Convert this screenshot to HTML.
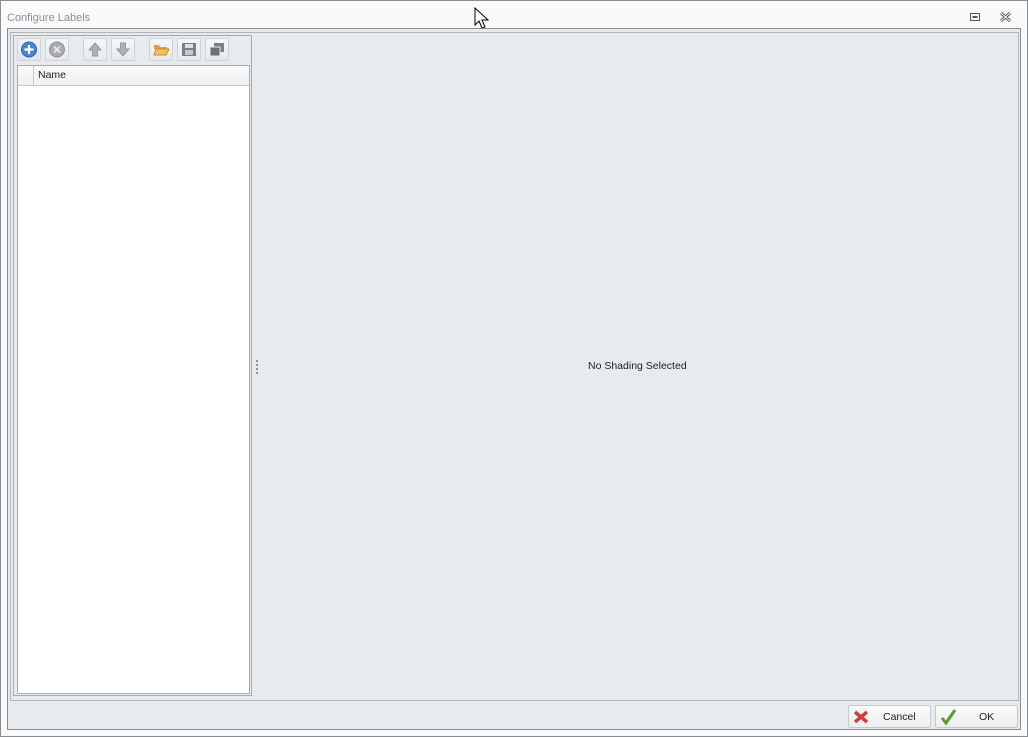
<!DOCTYPE html>
<html><head><style>
*{margin:0;padding:0;box-sizing:border-box}
body{width:1028px;height:737px;background:#fafafa;font-family:"Liberation Sans",sans-serif;font-size:10.5px;color:#222;position:relative;overflow:hidden}
.abs{position:absolute}
.win{left:0;top:0;width:1028px;height:737px;border:1px solid #8a8d91}
.title{left:7px;top:12px;color:#8a8f96;font-size:11px}
.content{left:7px;top:28px;width:1014px;height:702px;border:1px solid #8a8d91;background:#e8ebee}
.panel{left:10px;top:32px;width:1009px;height:669px;border:1px solid #b2b6ba}
.group{left:13px;top:35px;width:239px;height:661px;border:1px solid #a8acb0}
.grid{left:17px;top:65px;width:233px;height:629px;border:1px solid #a8acb0;background:#fff}
.hdr{left:0;top:0;width:231px;height:20px;border-bottom:1px solid #c4c8cc;background:linear-gradient(#fbfbfc,#eef0f2)}
.tb{top:38px;width:24px;height:23px;border:1px solid #d0d3d6;border-radius:2px;background:linear-gradient(#f6f7f8,#e7e9eb)}
.btn{top:705px;width:83px;height:23px;border:1px solid #c6c9cc;border-radius:2px;background:linear-gradient(#fafbfb,#eceef0);font-size:10.5px}
</style></head><body>
<div class="abs win"></div>
<div class="abs title">Configure Labels</div>
<svg class="abs" style="left:474px;top:7px" width="16" height="26"><path d="M1 1v17l4-4 3 7 3-1-3-7h6z" fill="#fff" stroke="#000"/></svg>
<svg class="abs" style="left:969px;top:12px" width="12" height="10"><rect x="1.5" y="1.5" width="9" height="7" fill="none" stroke="#555"/><rect x="3.5" y="4" width="5" height="2" fill="#555"/></svg>
<svg class="abs" style="left:999px;top:11px" width="13" height="12"><path d="M2 2L11 10M11 2L2 10" stroke="#555" stroke-width="3"/><path d="M2 2L11 10M11 2L2 10" stroke="#fff" stroke-width="1"/></svg>
<div class="abs content"></div>
<div class="abs panel"></div>
<div class="abs group"></div>
<div class="abs tb" style="left:17px;background:linear-gradient(#eef3fa,#dde6f2)"><svg width="22" height="21"><circle cx="11" cy="10.5" r="7.5" fill="#4a86d0" stroke="#2b5fa8"/><path d="M11 6v9M6.5 10.5h9" stroke="#fff" stroke-width="2.2"/></svg></div>
<div class="abs tb" style="left:45px"><svg width="22" height="21"><circle cx="11" cy="10.5" r="7.5" fill="#a9abad" stroke="#8e9093"/><path d="M8 7.5l6 6M14 7.5l-6 6" stroke="#e4e4e4" stroke-width="2"/></svg></div>
<div class="abs tb" style="left:83px"><svg width="22" height="21"><path d="M11 4l6 7h-3.5v6h-5v-6H5z" fill="#aeb0b2" stroke="#96989a"/></svg></div>
<div class="abs tb" style="left:111px"><svg width="22" height="21"><path d="M11 17l6-7h-3.5V4h-5v6H5z" fill="#aeb0b2" stroke="#96989a"/></svg></div>
<div class="abs tb" style="left:149px"><svg width="22" height="21"><path d="M4 6h5l1 2h7v2H4z" fill="#e0a040"/><path d="M4 16l2-6h13l-3 6z" fill="#f2c060" stroke="#c88a2a"/></svg></div>
<div class="abs tb" style="left:177px"><svg width="22" height="21"><rect x="4" y="4" width="14" height="13" fill="#7d8083"/><rect x="7" y="5" width="8" height="4" fill="#e0e0e0"/><rect x="7" y="11" width="8" height="5" fill="#c8c8c8"/></svg></div>
<div class="abs tb" style="left:205px"><svg width="22" height="21"><rect x="8" y="4" width="10" height="9" fill="#7d8083"/><rect x="4" y="8" width="10" height="9" fill="#6e7174" stroke="#e8e8e8"/></svg></div>
<div class="abs grid"><div class="abs hdr"><div class="abs" style="left:15px;top:0;width:1px;height:20px;background:#c4c8cc"></div><div class="abs" style="left:20px;top:3px">Name</div></div></div>
<div class="abs" style="left:256px;top:360px;width:2px;height:14px;background:repeating-linear-gradient(#8e9196 0 2px,transparent 2px 4px)"></div>
<div class="abs" style="left:588px;top:360px">No Shading Selected</div>
<div class="abs btn" style="left:848px"><svg class="abs" style="left:4px;top:3px" width="16" height="16"><path d="M2 3L14 13M14 3L2 13" stroke="#d23c3c" stroke-width="3.5"/></svg><span class="abs" style="left:34px;top:5px">Cancel</span></div>
<div class="abs btn" style="left:935px"><svg class="abs" style="left:4px;top:2px" width="18" height="18"><path d="M2 10l4 5L15 2" stroke="#5a9a2c" stroke-width="3" fill="none"/></svg><span class="abs" style="left:43px;top:5px">OK</span></div>
</body></html>
